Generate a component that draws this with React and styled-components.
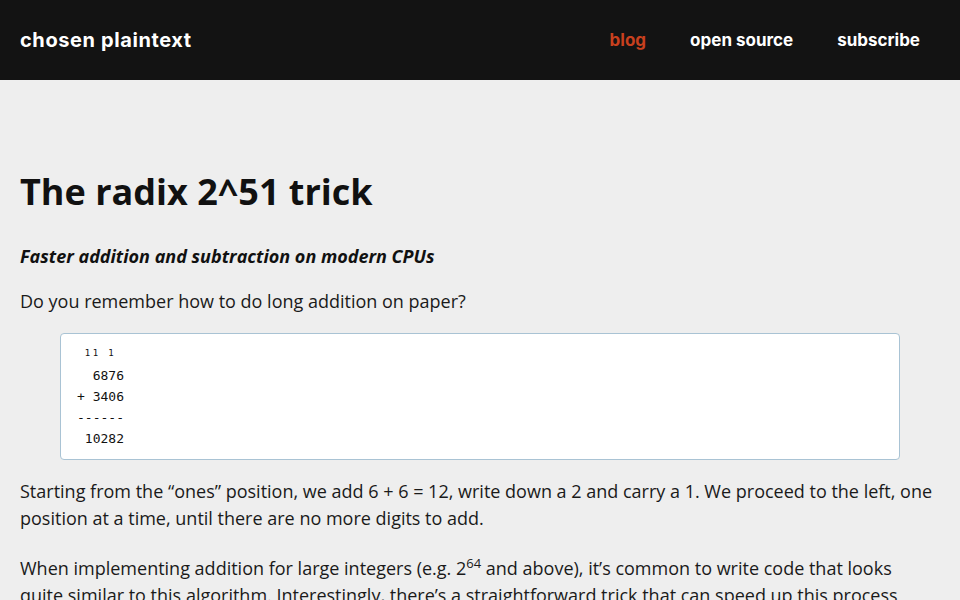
import styled, { createGlobalStyle } from 'styled-components';

const GlobalStyle = createGlobalStyle`
  html, body {
    margin: 0;
    padding: 0;
    background: #eeeeee;
  }
  body {
    font-family: "Open Sans", "Liberation Sans", sans-serif;
    color: #111111;
  }
`;

const Header = styled.header`
  height: 80px;
  background: #131313;
  display: flex;
  align-items: center;
  justify-content: space-between;
  padding: 0 40px 0 20px;
`;

const Logo = styled.a`
  font-family: Inter, "DejaVu Sans", sans-serif;
  font-weight: 700;
  font-size: 20px;
  color: #ffffff;
  text-decoration: none;
  letter-spacing: 0.6px;
`;

const Nav = styled.nav`
  display: flex;
  gap: 44px;
`;

const NavLink = styled.a`
  font-family: Inter, "DejaVu Sans", sans-serif;
  font-weight: 700;
  font-size: 17px;
  color: ${(p) => (p.$active ? '#c8401e' : '#ffffff')};
  text-decoration: none;
`;

const Article = styled.main`
  padding: 90px 20px 0;
  max-width: 920px;
`;

const Title = styled.h1`
  font-size: 36px;
  font-weight: 700;
  line-height: 1.2;
  margin: 0 0 30px;
  color: #111111;
`;

const Subtitle = styled.p`
  font-size: 18px;
  font-weight: 700;
  font-style: italic;
  line-height: 27px;
  margin: 0 0 18px;
`;

const Paragraph = styled.p`
  max-width: 914px;
  font-size: 18px;
  line-height: 27px;
  margin: 0 0 18px;
  color: #1a1a1a;

  sup {
    font-size: 13px;
  }
`;

const CodeBlock = styled.pre`
  margin: 0 40px 18px;
  background: #ffffff;
  border: 1px solid #a9c3d4;
  border-radius: 4px;
  padding: 7px 16px 10px;
  font-family: "DejaVu Sans Mono", "Liberation Mono", monospace;
  font-size: 13px;
  line-height: 21px;
  color: #111111;
`;

const CarryLine = styled.span`
  display: block;
  line-height: 24px;
  font-size: 9px;
  letter-spacing: 2.4px;
`;

export default function App() {
  return (
    <>
      <GlobalStyle />
      <Header>
        <Logo href="#">chosen plaintext</Logo>
        <Nav>
          <NavLink href="#" $active>blog</NavLink>
          <NavLink href="#">open source</NavLink>
          <NavLink href="#">subscribe</NavLink>
        </Nav>
      </Header>
      <Article>
        <Title>The radix 2^51 trick</Title>
        <Subtitle>Faster addition and subtraction on modern CPUs</Subtitle>
        <Paragraph>Do you remember how to do long addition on paper?</Paragraph>
        <CodeBlock>
          <CarryLine>{' 11 1'}</CarryLine>
          {'  6876\n+ 3406\n------\n 10282'}
        </CodeBlock>
        <Paragraph>
          Starting from the “ones” position, we add 6 + 6 = 12, write down a 2 and carry a 1. We
          proceed to the left, one position at a time, until there are no more digits to add.
        </Paragraph>
        <Paragraph>
          When implementing addition for large integers (e.g. 2<sup>64</sup> and above), it’s
          common to write code that looks quite similar to this algorithm. Interestingly, there’s a
          straightforward trick that can speed up this process enormously on modern CPUs.
        </Paragraph>
      </Article>
    </>
  );
}
